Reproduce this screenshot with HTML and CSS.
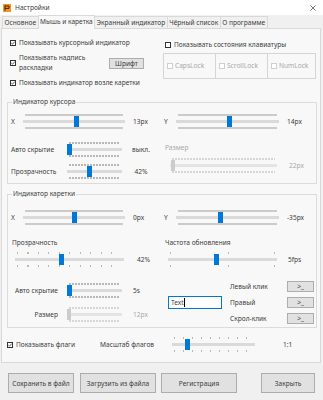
FILE: index.html
```html
<!DOCTYPE html>
<html lang="ru">
<head>
    <meta charset="UTF-8">
    <title>Настройки</title>
    <link rel="stylesheet" href="styles.css">
</head>
<body>
    <svg class="defs" width="0" height="0">
        <symbol id="cb-on" viewBox="0 0 6 6">
            <rect x="0.5" y="0.5" width="5" height="5" fill="#fff" stroke="#333"/>
            <path d="M1.3 3 L2.5 4.2 L4.8 1.6" fill="none" stroke="#333" stroke-width="0.8"/>
        </symbol>
        <symbol id="cb-off" viewBox="0 0 6 6">
            <rect x="0.5" y="0.5" width="5" height="5" fill="#fff" stroke="#333"/>
        </symbol>
        <symbol id="cb-dis" viewBox="0 0 6 6">
            <rect x="0.5" y="0.5" width="5" height="5" fill="#fff" stroke="#cfcfcf"/>
        </symbol>
    </svg>

    <div class="titlebar">
        <svg class="app-icon" viewBox="0 0 8 8">
            <rect width="8" height="8" fill="#f7941d"/>
            <path d="M2 1.6 V6.6 M2 2 H6 V4.4 H2" fill="none" stroke="#3a2510" stroke-width="1"/>
        </svg>
        <span class="title">Настройки</span>
        <svg class="close" viewBox="0 0 7 7">
            <path d="M0.5 0.5 L6.5 6.5 M6.5 0.5 L0.5 6.5" stroke="#333" stroke-width="0.8"/>
        </svg>
    </div>

    <div class="tabs">
        <div class="tab">Основное</div>
        <div class="tab active">Мышь и каретка</div>
        <div class="tab">Экранный индикатор</div>
        <div class="tab">Чёрный список</div>
        <div class="tab">О программе</div>
    </div>

    <div class="panel">
        <div class="top">
            <div class="top-left">
                <label class="check"><svg class="box"><use href="#cb-on"/></svg>Показывать курсорный индикатор</label>
                <div class="check-row">
                    <label class="check"><svg class="box"><use href="#cb-on"/></svg><span>Показывать надпись<br>раскладки</span></label>
                    <button class="btn font-btn">Шрифт</button>
                </div>
                <label class="check"><svg class="box"><use href="#cb-on"/></svg>Показывать индикатор возле каретки</label>
            </div>
            <div class="top-right">
                <label class="check"><svg class="box"><use href="#cb-off"/></svg>Показывать состояния клавиатуры</label>
                <div class="locks">
                    <div class="lock"><svg class="box"><use href="#cb-dis"/></svg>CapsLock</div>
                    <div class="lock"><svg class="box"><use href="#cb-dis"/></svg>ScrollLock</div>
                    <div class="lock"><svg class="box"><use href="#cb-dis"/></svg>NumLock</div>
                </div>
            </div>
        </div>

        <fieldset class="group cursor-group">
            <legend>Индикатор курсора</legend>
            <div class="half">
                <div class="row xy-row">
                    <span>X</span>
                    <div class="slider solid"><span class="thumb" style="left:51px"></span></div>
                    <span class="value">13px</span>
                </div>
                <div class="row short-row first-short">
                    <span>Авто скрытие</span>
                    <div class="slider dots"><span class="thumb" style="left:0"></span></div>
                    <span class="value mid">выкл.</span>
                </div>
                <div class="row short-row">
                    <span>Прозрачность</span>
                    <div class="slider dots"><span class="thumb" style="left:20px"></span></div>
                    <span class="value mid">42%</span>
                </div>
            </div>
            <div class="half">
                <div class="row xy-row y-row">
                    <span>Y</span>
                    <div class="slider solid"><span class="thumb" style="left:51px"></span></div>
                    <span class="value">14px</span>
                </div>
                <div class="caption off size-caption">Размер</div>
                <div class="row size-row">
                    <div class="slider dots off"><span class="thumb" style="left:1px"></span></div>
                    <span class="value off">22px</span>
                </div>
            </div>
        </fieldset>

        <fieldset class="group caret-group">
            <legend>Индикатор каретки</legend>
            <div class="half">
                <div class="row xy-row">
                    <span>X</span>
                    <div class="slider solid"><span class="thumb" style="left:49px"></span></div>
                    <span class="value">0px</span>
                </div>
                <div class="caption">Прозрачность</div>
                <div class="row wide-row">
                    <div class="slider sparse"><span class="thumb" style="left:44px"></span></div>
                    <span class="value">42%</span>
                </div>
                <div class="row right-row first-right">
                    <span>Авто скрытие</span>
                    <div class="slider dots"><span class="thumb" style="left:0"></span></div>
                    <span class="value">5s</span>
                </div>
                <div class="row right-row">
                    <span>Размер</span>
                    <div class="slider dots off"><span class="thumb" style="left:0"></span></div>
                    <span class="value off">12px</span>
                </div>
            </div>
            <div class="half">
                <div class="row xy-row y-row">
                    <span>Y</span>
                    <div class="slider solid"><span class="thumb" style="left:42px"></span></div>
                    <span class="value">-35px</span>
                </div>
                <div class="caption">Частота обновления</div>
                <div class="row wide-row">
                    <div class="slider freq"><span class="thumb" style="left:46px"></span></div>
                    <span class="value">5fps</span>
                </div>
                <div class="clicks">
                    <div class="text-input"><span class="caret">Text</span></div>
                    <span class="click-label">Левый клик</span>
                    <button class="btn small">&gt;_</button>
                    <span class="click-label">Правый</span>
                    <button class="btn small">&gt;_</button>
                    <span class="click-label">Скрол-клик</span>
                    <button class="btn small">&gt;_</button>
                </div>
            </div>
        </fieldset>

        <div class="row flags-row">
            <label class="check"><svg class="box"><use href="#cb-on"/></svg>Показывать флаги</label>
            <span>Масштаб флагов</span>
            <div class="slider flag"><span class="thumb" style="left:13px"></span></div>
            <span class="value">1:1</span>
        </div>
    </div>

    <div class="actions">
        <button class="btn action save">Сохранить в файл</button>
        <button class="btn action load">Загрузить из файла</button>
        <button class="btn action reg">Регистрация</button>
        <button class="btn action close-btn">Закрыть</button>
    </div>
</body>
</html>
```

FILE: styles.css
```css
body {
    margin: 0;
    width: 323px;
    height: 400px;
    overflow: hidden;
    background-color: #f0f0f0;
    font-family: 'Noto Sans', sans-serif;
    font-size: 6.6px;
    line-height: 10px;
    color: #404040;
}

.defs {
    position: absolute;
    width: 0;
    height: 0;
}

/* title bar */
.titlebar {
    height: 15px;
    background-color: #fff;
    display: flex;
    align-items: center;
    padding: 0 7px 0 3px;
}

.app-icon {
    width: 8px;
    height: 8px;
    margin-right: 4px;
}

.title {
    flex: 1;
}

.close {
    width: 6px;
    height: 6px;
}

/* tabs */
.tabs {
    display: flex;
    align-items: flex-end;
    height: 13px;
    padding-left: 2px;
}

.tab {
    box-sizing: border-box;
    height: 12px;
    line-height: 11px;
    padding: 0 1.5px;
    border: 1px solid #d9d9d9;
    border-bottom: 0;
    margin-right: -1px;
    background-color: #f0f0f0;
}

.tab.active {
    height: 14px;
    margin-bottom: -1px;
    line-height: 12px;
    background-color: #f8f8f8;
    position: relative;
    z-index: 1;
}

.panel {
    box-sizing: border-box;
    height: 335px;
    margin: 0 2px 0 1px;
    border: 1px solid #d9d9d9;
    background-color: #f8f8f8;
}

/* checkboxes */
.check {
    display: flex;
    align-items: center;
    gap: 3px;
    height: 10px;
}

.box {
    width: 6px;
    height: 6px;
    flex: none;
}

.top {
    display: grid;
    grid-template-columns: 153px 153px;
    padding: 9px 0 0 8px;
}

.top-left {
    display: flex;
    flex-direction: column;
    gap: 5px;
}

.check-row {
    display: flex;
    align-items: center;
    justify-content: space-between;
    height: 20px;
    padding-right: 19px;
}

.check-row .check {
    height: 20px;
}

.top-right {
    padding-top: 2px;
}

.top-right > .check {
    padding-left: 2px;
}

.locks {
    display: grid;
    grid-template-columns: 51px 52px 50px;
    height: 26px;
    margin-top: 3px;
    box-sizing: border-box;
    border: 1px solid #d5d5d5;
}

.lock {
    display: flex;
    align-items: center;
    gap: 2px;
    padding-left: 3px;
    color: #a8a8a8;
    border-left: 1px solid #d5d5d5;
}

.lock:first-child {
    border-left: 0;
}

/* buttons */
.btn {
    box-sizing: border-box;
    margin: 0;
    padding: 0;
    font-family: inherit;
    font-size: 6.6px;
    color: #404040;
    background-color: #e1e1e1;
    border: 1px solid #adadad;
}

.font-btn {
    width: 35px;
    height: 11px;
    line-height: 9px;
}

/* group boxes */
.group {
    box-sizing: border-box;
    width: 310px;
    min-width: 0;
    margin: 9px 0 0 5px;
    padding: 0 0 4px 3px;
    border: 1px solid #dcdcdc;
    display: grid;
    grid-template-columns: 153px 1fr;
}

.group legend {
    padding: 0 1px;
    margin-left: 1px;
    line-height: 10px;
}

.caret-group {
    margin-top: 5px;
    padding-bottom: 3px;
}

.row {
    display: grid;
    align-items: center;
    height: 15px;
}

.xy-row {
    grid-template-columns: 12px 102px auto;
    margin-top: 7px;
}

.y-row {
    grid-template-columns: 12px 103px auto;
}

.caret-group .xy-row {
    margin-top: 11px;
}

.value {
    padding-left: 8px;
}

.value.mid {
    padding-left: 0;
    text-align: center;
    width: 38px;
}

.off {
    color: #a8a8a8;
}

.short-row {
    grid-template-columns: 56px 55px auto;
    margin-top: 7px;
}

.first-short {
    margin-top: 13px;
}

.caption {
    margin-top: 13px;
    height: 10px;
    padding-left: 1px;
}

.size-caption {
    margin-top: 14px;
}

.size-row {
    grid-template-columns: 107px auto;
    margin-top: 5px;
    padding-left: 6px;
}

.size-row .value {
    padding-left: 12px;
}

.wide-row {
    grid-template-columns: 109px auto;
    margin-top: 4px;
    padding-left: 4px;
}

.wide-row .value {
    padding-left: 13px;
}

.half:last-child .wide-row .value {
    padding-left: 11px;
}

.right-row {
    grid-template-columns: 47px 55px auto;
    column-gap: 9px;
    margin-top: 9px;
}

.right-row > span:first-child {
    text-align: right;
}

.right-row .value {
    padding-left: 2px;
}

.first-right {
    margin-top: 16px;
}

/* sliders */
.slider {
    position: relative;
    height: 15px;
    --ticks: #cbcbcb;
    background: linear-gradient(#dadada, #dadada) center / 100% 3px no-repeat;
}

.slider::before,
.slider::after {
    content: "";
    position: absolute;
    left: 2px;
    right: 2px;
    height: 2px;
    background: var(--ticks);
}

.slider::before {
    top: 0;
}

.slider::after {
    bottom: 0;
}

.slider.dots {
    --ticks: repeating-linear-gradient(90deg, #b8b8b8 0 2px, transparent 2px 3px);
}

.slider.sparse {
    --ticks: repeating-linear-gradient(90deg, #b8b8b8 0 1px, transparent 1px 10.5px);
}

.slider.flag {
    --ticks: repeating-linear-gradient(90deg, #b8b8b8 0 1px, transparent 1px 9px);
}

.slider.freq {
    --ticks: linear-gradient(#b8b8b8, #b8b8b8) 0 0 / 1px 100% no-repeat,
        linear-gradient(#b8b8b8, #b8b8b8) 56% 0 / 1px 100% no-repeat,
        linear-gradient(#b8b8b8, #b8b8b8) 100% 0 / 1px 100% no-repeat;
}

.slider.off {
    --ticks: repeating-linear-gradient(90deg, #d6d6d6 0 2px, transparent 2px 3px);
    background: linear-gradient(#e4e4e4, #e4e4e4) center / 100% 3px no-repeat;
}

.thumb {
    position: absolute;
    top: 2px;
    width: 5px;
    height: 11px;
    background-color: #0078d7;
}

.slider.off .thumb {
    width: 4px;
    background-color: #cccccc;
}

/* click actions */
.clicks {
    display: grid;
    grid-template-columns: 54px 49px 27px;
    grid-template-rows: repeat(3, 11px);
    column-gap: 8px;
    row-gap: 5px;
    margin-top: 14px;
    padding-left: 4px;
    align-items: center;
}

.text-input {
    grid-column: 1;
    grid-row: 2;
    box-sizing: border-box;
    height: 13px;
    margin: -1px 0;
    padding-left: 2px;
    line-height: 11px;
    background-color: #fff;
    border: 1px solid #0078d7;
}

.caret {
    border-right: 1px solid #000;
}

.click-label {
    grid-column: 2;
}

.btn.small {
    grid-column: 3;
    height: 11px;
    line-height: 9px;
}

.flags-row {
    grid-template-columns: 93px 72px 83px auto;
    margin-top: 9px;
    padding-left: 5px;
}

.flags-row .value {
    padding-left: 28px;
}

/* bottom buttons */
.actions {
    display: flex;
    height: 20px;
    margin-top: 10px;
}

.action {
    height: 20px;
}

.save {
    width: 66px;
    margin-left: 8px;
}

.load {
    width: 76px;
    margin-left: 6px;
}

.reg {
    width: 76px;
    margin-left: 5px;
}

.close-btn {
    width: 54px;
    margin-left: 24px;
}
```
